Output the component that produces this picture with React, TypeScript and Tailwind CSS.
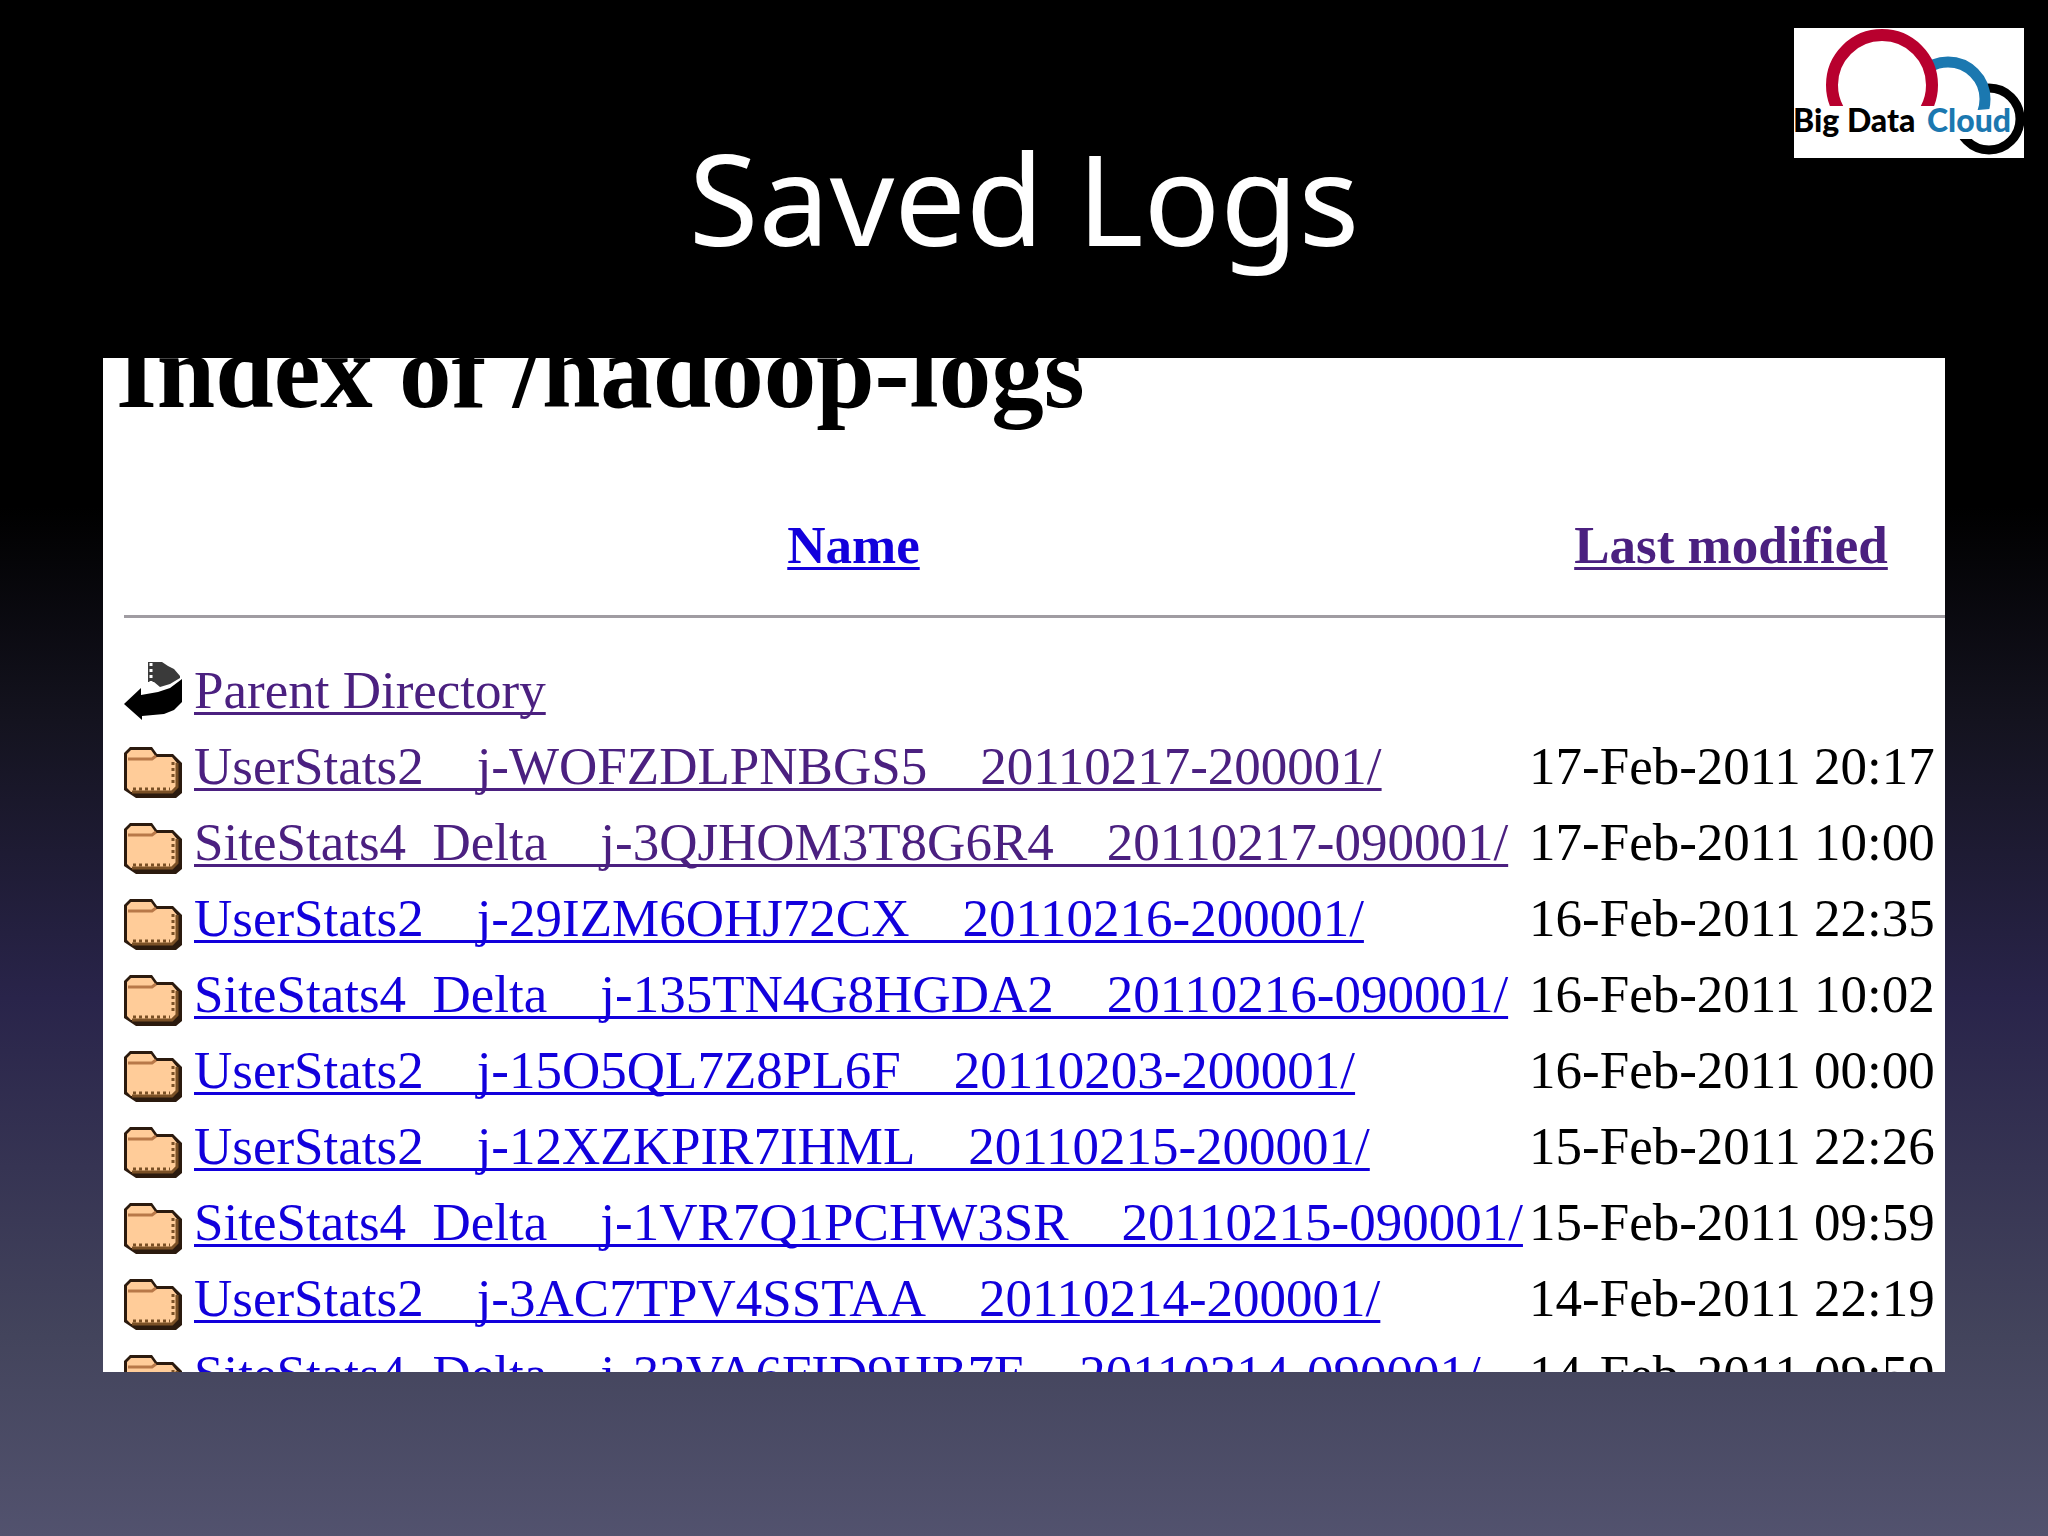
type LogEntry = {
  name: string;
  modified: string;
  visited?: boolean;
};

const entries: LogEntry[] = [
  { name: 'UserStats2__j-WOFZDLPNBGS5__20110217-200001/', modified: '17-Feb-2011 20:17', visited: true },
  { name: 'SiteStats4_Delta__j-3QJHOM3T8G6R4__20110217-090001/', modified: '17-Feb-2011 10:00', visited: true },
  { name: 'UserStats2__j-29IZM6OHJ72CX__20110216-200001/', modified: '16-Feb-2011 22:35' },
  { name: 'SiteStats4_Delta__j-135TN4G8HGDA2__20110216-090001/', modified: '16-Feb-2011 10:02' },
  { name: 'UserStats2__j-15O5QL7Z8PL6F__20110203-200001/', modified: '16-Feb-2011 00:00' },
  { name: 'UserStats2__j-12XZKPIR7IHML__20110215-200001/', modified: '15-Feb-2011 22:26' },
  { name: 'SiteStats4_Delta__j-1VR7Q1PCHW3SR__20110215-090001/', modified: '15-Feb-2011 09:59' },
  { name: 'UserStats2__j-3AC7TPV4SSTAA__20110214-200001/', modified: '14-Feb-2011 22:19' },
  { name: 'SiteStats4_Delta__j-32VA6FID9HB7E__20110214-090001/', modified: '14-Feb-2011 09:59' },
];

const linkClass =
  'underline decoration-[3px] underline-offset-[4px] [text-decoration-skip-ink:none]';

const Logo = () => (
  <svg viewBox="0 0 230 130" className="h-[130px] w-[230px] bg-white" role="img" aria-label="Big Data Cloud">
    <clipPath id="red-arc">
      <rect width="230" height="78" />
    </clipPath>
    <clipPath id="blue-arc">
      <path d="M138 0 H230 V78 L184 82 L138 78 Z" />
    </clipPath>
    <clipPath id="black-arc">
      <path d="M192 40 H230 V130 H160 V111 H192 Z" />
    </clipPath>
    <circle cx="195" cy="91" r="31" fill="none" stroke="#000" strokeWidth="9" clipPath="url(#black-arc)" />
    <circle cx="154" cy="71" r="37" fill="none" stroke="#1b78b0" strokeWidth="11" clipPath="url(#blue-arc)" />
    <path d="M118 45 H134 V78 H118 Z" fill="#fff" />
    <circle cx="88" cy="57" r="50" fill="none" stroke="#b8002e" strokeWidth="12" clipPath="url(#red-arc)" />
    <text x="-1" y="104" fontSize="32" fontWeight="900" fontFamily="Lato, sans-serif" fill="#000">
      Big Data
    </text>
    <text x="133" y="104" fontSize="32" fontWeight="900" fontFamily="Lato, sans-serif" fill="#1b78b0">
      Cloud
    </text>
  </svg>
);

const FolderIcon = () => (
  <svg viewBox="0 0 58 64" className="h-16 w-[58px]" aria-hidden="true">
    <path d="M6 13 H28 L33 20 H49 L58 29 V59 L52 64 H12 L0 56 V19 Z" fill="#2b1a0e" />
    <path d="M3 20 L7 16 H27 L32 23 H48 L53 29 V53 L48 58 H7 L3 54 Z" fill="#ffcc99" />
    <path d="M4 25 H28 L32 22" fill="none" stroke="#b87848" strokeWidth="3" />
    <path d="M53 29 V53 L48 58 H8" fill="none" stroke="#7a5026" strokeWidth="3" />
    <path d="M9 55 H46 M49 28 V52" fill="none" stroke="#7a5026" strokeWidth="3" strokeDasharray="3 3" />
  </svg>
);

const BackIcon = () => (
  <svg viewBox="0 0 58 64" className="h-16 w-[58px]" aria-hidden="true">
    <path d="M24 4 H38 L44 8 L50 11 L56 18 V20 L46 26 L36 29 L30 24 H24 Z" fill="#3a3a3a" />
    <path d="M27 5 V24" stroke="#fff" strokeWidth="3" strokeDasharray="3 3" />
    <path d="M0 46 L17 30 V37 L34 34 L46 30 L58 21 V44 L50 52 L40 56 L18 58 V62 Z" fill="#000" />
  </svg>
);

const App = () => {
  return (
    <div className="relative flex h-screen flex-col bg-[linear-gradient(to_bottom,#000_33%,#14131f_47%,#29244a_65%,#43445c_87%,#52526e_100%)] px-[103px] pb-[164px]">
      <div className="absolute top-7 right-6">
        <Logo />
      </div>
      <header className="flex h-[358px] shrink-0 justify-center pt-[109px]">
        <h1 className="font-['Noto_Sans',sans-serif] text-[127px] leading-[176px] text-white">
          Saved Logs
        </h1>
      </header>
      <main className="min-h-0 flex-1 overflow-hidden bg-white pl-[21px] font-['Liberation_Serif',serif] text-[53px] leading-[76px] whitespace-nowrap text-black">
        <h2 className="-mt-9 -ml-2 mb-[85px] text-[105px] leading-[100px] font-bold">
          Index of /hadoop-logs
        </h2>
        <table className="w-full table-fixed border-collapse">
          <thead>
            <tr>
              <th className="w-[70px] p-0" />
              <th className="w-[1335px] py-0 pr-4 pl-0 text-center">
                <a href="#name" className={`${linkClass} text-[#1200dc]`}>
                  Name
                </a>
              </th>
              <th className="py-0 pr-3 pl-0 text-center">
                <a href="#modified" className={`${linkClass} text-[#4b2080]`}>
                  Last modified
                </a>
              </th>
            </tr>
          </thead>
          <tbody>
            <tr>
              <td colSpan={3} className="px-0 pt-8 pb-[34px]">
                <hr className="border-t-[3px] border-[#a09ca2]" />
              </td>
            </tr>
            <tr className="h-[76px]">
              <td className="p-0">
                <BackIcon />
              </td>
              <td className="p-0">
                <a href="#parent" className={`${linkClass} text-[#4b2080]`}>
                  Parent Directory
                </a>
              </td>
              <td className="p-0" />
            </tr>
            {entries.map((entry) => (
              <tr key={entry.name} className="h-[76px]">
                <td className="p-0">
                  <FolderIcon />
                </td>
                <td className="p-0">
                  <a
                    href={`#${entry.name}`}
                    className={`${linkClass} ${entry.visited ? 'text-[#4b2080]' : 'text-[#1200dc]'}`}
                  >
                    {entry.name}
                  </a>
                </td>
                <td className="p-0">{entry.modified}</td>
              </tr>
            ))}
          </tbody>
        </table>
      </main>
    </div>
  );
};

export default App;
